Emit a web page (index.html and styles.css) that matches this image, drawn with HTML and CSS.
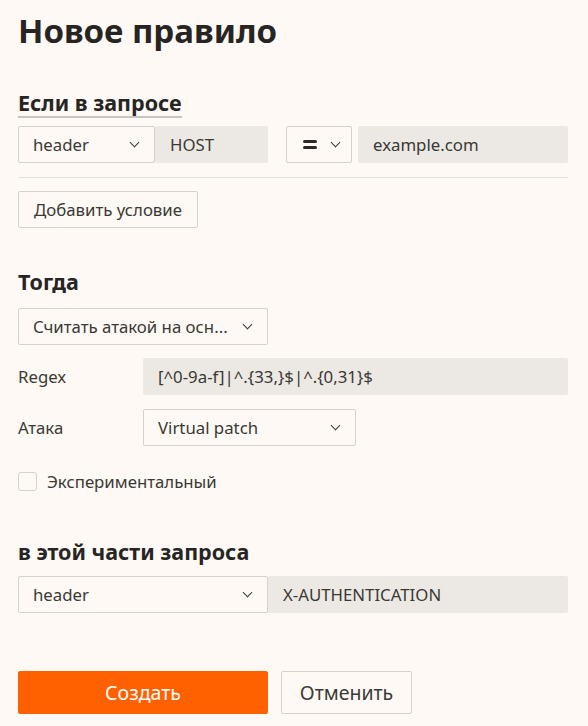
FILE: index.html
```html
<!DOCTYPE html>
<html lang="ru">
<head>
<meta charset="utf-8">
<link rel="stylesheet" href="styles.css">
</head>
<body>
<div class="page">
  <h1 class="title">Новое правило</h1>

  <h2 class="section-title underlined">Если в запросе</h2>
  <div class="row cond-row">
    <div class="select w137">header<span class="chev"></span></div>
    <div class="input w113">HOST</div>
    <div class="select op w66"><span class="eq"><i></i><i></i></span><span class="chev"></span></div>
    <div class="input flex1">example.com</div>
  </div>
  <div class="divider"></div>
  <div class="btn btn-add">Добавить условие</div>

  <h2 class="section-title then">Тогда</h2>
  <div class="select w250">Считать атакой на осн...<span class="chev"></span></div>
  <div class="field-row regex-row">
    <span class="label">Regex</span>
    <div class="input flex1">[^0-9a-f]|^.{33,}$|^.{0,31}$</div>
  </div>
  <div class="field-row attack-row">
    <span class="label">Атака</span>
    <div class="select w213">Virtual patch<span class="chev"></span></div>
  </div>
  <label class="check"><span class="box"></span>Экспериментальный</label>

  <h2 class="section-title part">в этой части запроса</h2>
  <div class="row">
    <div class="select w250">header<span class="chev"></span></div>
    <div class="input flex1">X-AUTHENTICATION</div>
  </div>

  <div class="actions">
    <div class="btn btn-primary">Создать</div>
    <div class="btn btn-cancel">Отменить</div>
  </div>
</div>
</body>
</html>
```

FILE: styles.css
```css
* { box-sizing: border-box; }
html, body { margin: 0; padding: 0; }
body {
  background: #fef9f4;
  font-family: "Noto Sans", "Open Sans", sans-serif;
  color: #2b2a28;
  width: 588px;
  height: 726px;
  overflow: hidden;
}
.page { padding: 9px 20px 0 18px; }
.title {
  margin: 0;
  font-size: 33px;
  font-weight: 700;
  line-height: 44px;
  color: #262524;
}
.section-title {
  margin: 0;
  font-size: 21.5px;
  font-weight: 700;
  line-height: 26px;
  color: #262524;
}
.underlined {
  display: inline-block;
  margin-top: 37px;
  border-bottom: 2px solid #c9c4bf;
  padding-bottom: 0;
}
.row { display: flex; align-items: center; }
.cond-row { margin-top: 8px; }
.select, .input {
  height: 37px;
  display: flex;
  align-items: center;
  font-size: 16.8px;
  color: #3a3936;
  white-space: nowrap;
}
.select {
  border: 1px solid #d6d1cc;
  border-radius: 2px;
  padding: 0 14px;
  background: #fef9f4;
  justify-content: space-between;
}
.input {
  background: #ece8e3;
  border-radius: 2px;
  padding: 0 15px;
}
.chev {
  width: 7px; height: 7px;
  border-right: 1.5px solid #3a3936;
  border-bottom: 1.5px solid #3a3936;
  transform: rotate(45deg);
  margin-top: -5px;
  margin-right: 2px;
}
.w137 { width: 137px; }
.w113 { width: 113px; }
.w66 { width: 66px; margin-left: 18px; margin-right: 6px; }
.w250 { width: 250px; }
.w213 { width: 213px; }
.flex1 { flex: 1; }
.op { padding: 0 10px 0 16px; }
.eq { display: flex; flex-direction: column; gap: 3px; }
.eq i { display: block; width: 14px; height: 3px; border-radius: 1.5px; background: #2b2a28; }
.divider { height: 1px; background: #e6e0da; margin-top: 14px; }
.btn {
  display: inline-flex;
  align-items: center;
  justify-content: center;
  border: 1px solid #d6d1cc;
  border-radius: 2px;
  font-size: 16.8px;
  color: #3a3936;
  background: #fef9f4;
}
.btn-add { height: 37px; width: 180px; margin-top: 13px; }
.then { margin-top: 41px; }
.then + .select { margin-top: 13px; }
.field-row { display: flex; align-items: center; }
.label { width: 125px; font-size: 16.8px; color: #3a3936; }
.regex-row { margin-top: 13px; }
.attack-row { margin-top: 14px; }
.check {
  display: flex;
  align-items: center;
  margin-top: 24px;
  font-size: 16.8px;
  color: #3a3936;
}
.box {
  width: 19px; height: 19px;
  border: 1px solid #d6d1cc;
  border-radius: 3px;
  margin-right: 10px;
  background: #fef9f4;
}
.part { margin-top: 46px; margin-bottom: 11px; }
.actions { display: flex; margin-top: 58px; gap: 13px; }
.btn-primary {
  width: 250px; height: 43px;
  background: #ff6000;
  border-color: #ff6000;
  color: #fff;
  font-size: 19.5px;
}
.btn-cancel { width: 131px; height: 43px; font-size: 19.5px; }
```
